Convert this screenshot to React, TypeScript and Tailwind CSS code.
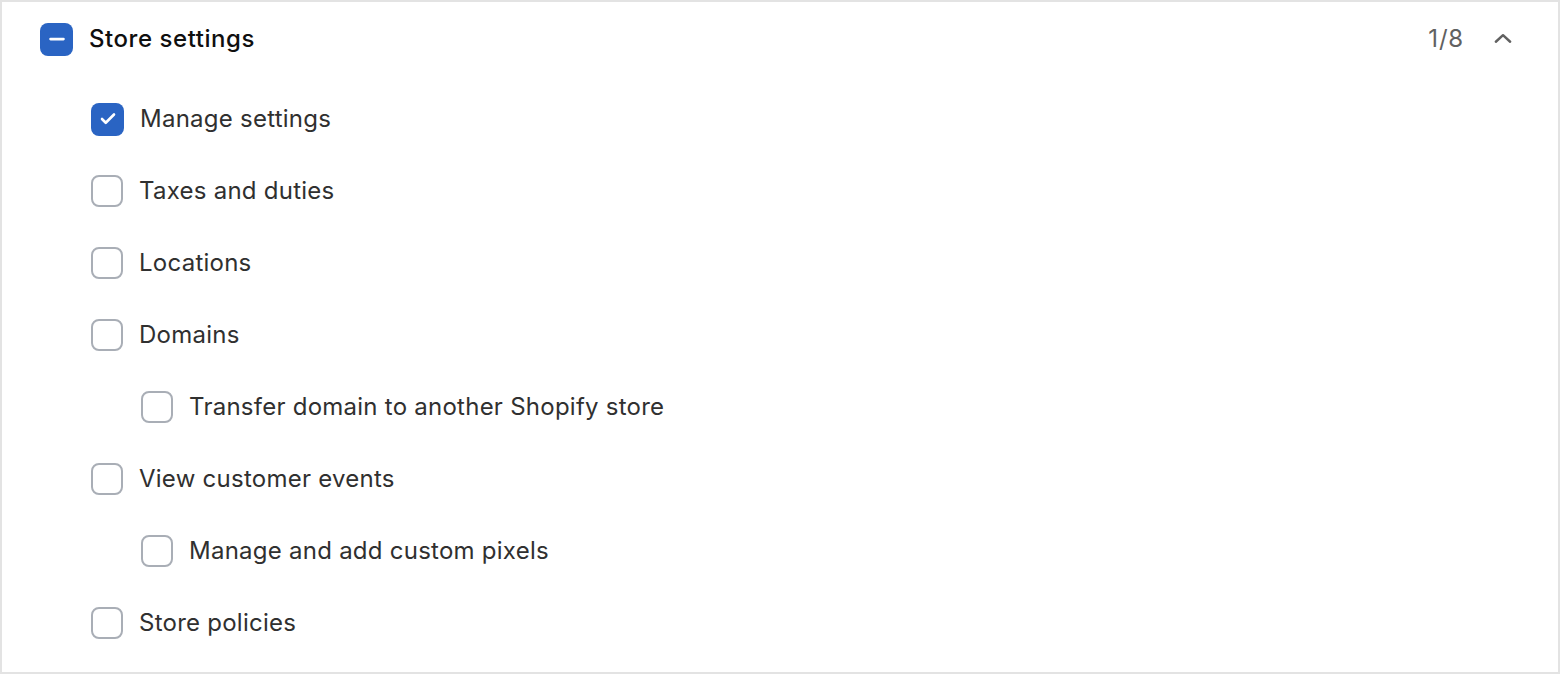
import { Check, Minus } from 'lucide-react'

type Item = { label: string; checked?: boolean; nested?: boolean }

const items: Item[] = [
  { label: 'Manage settings', checked: true },
  { label: 'Taxes and duties' },
  { label: 'Locations' },
  { label: 'Domains' },
  { label: 'Transfer domain to another Shopify store', nested: true },
  { label: 'View customer events' },
  { label: 'Manage and add custom pixels', nested: true },
  { label: 'Store policies' },
]

function Box({ checked, indeterminate }: { checked?: boolean; indeterminate?: boolean }) {
  if (checked || indeterminate) {
    return (
      <span className="flex h-[33px] w-[33px] shrink-0 items-center justify-center rounded-[8px] bg-[#2a64c3]">
        {indeterminate ? (
          <Minus className="h-[22px] w-[22px] text-white" strokeWidth={3} />
        ) : (
          <Check className="h-[18px] w-[18px] text-white" strokeWidth={3.5} />
        )}
      </span>
    )
  }
  return <span className="h-[32px] w-[32px] shrink-0 rounded-[8px] border-[2.5px] border-[#a9aeb6] bg-white" />
}

export default function App() {
  return (
    <div
      className="h-[674px] w-[1560px] border-2 border-[#e3e3e3] bg-white text-[#303030]"
      style={{ fontFamily: 'Inter, "Noto Sans", sans-serif' }}
    >
      <div className="flex items-center pl-[38px] pr-[44px] pt-[19px]">
        <Box indeterminate />
        <span className="ml-[16px] text-[24px] font-medium tracking-[0.55px] text-[#0f0f0f]">Store settings</span>
        <div className="flex-1" />
        <span className="text-[24px] tracking-[0.8px] text-[#616161]">1/8</span>
        <svg className="ml-[28px] h-[22px] w-[22px]" viewBox="0 0 20 20" fill="none">
          <path d="M3.5 12.5 10 6.5l6.5 6" stroke="#616161" strokeWidth="2.2" strokeLinecap="round" strokeLinejoin="round" />
        </svg>
      </div>
      <div className="mt-[26px] flex flex-col pl-[89px]">
        {items.map((it) => (
          <label
            key={it.label}
            className={`flex h-[72px] items-center gap-[16px] ${it.nested ? 'pl-[50px]' : ''}`}
          >
            <Box checked={it.checked} />
            <span className="text-[24px] tracking-[0.25px]">{it.label}</span>
          </label>
        ))}
      </div>
    </div>
  )
}
